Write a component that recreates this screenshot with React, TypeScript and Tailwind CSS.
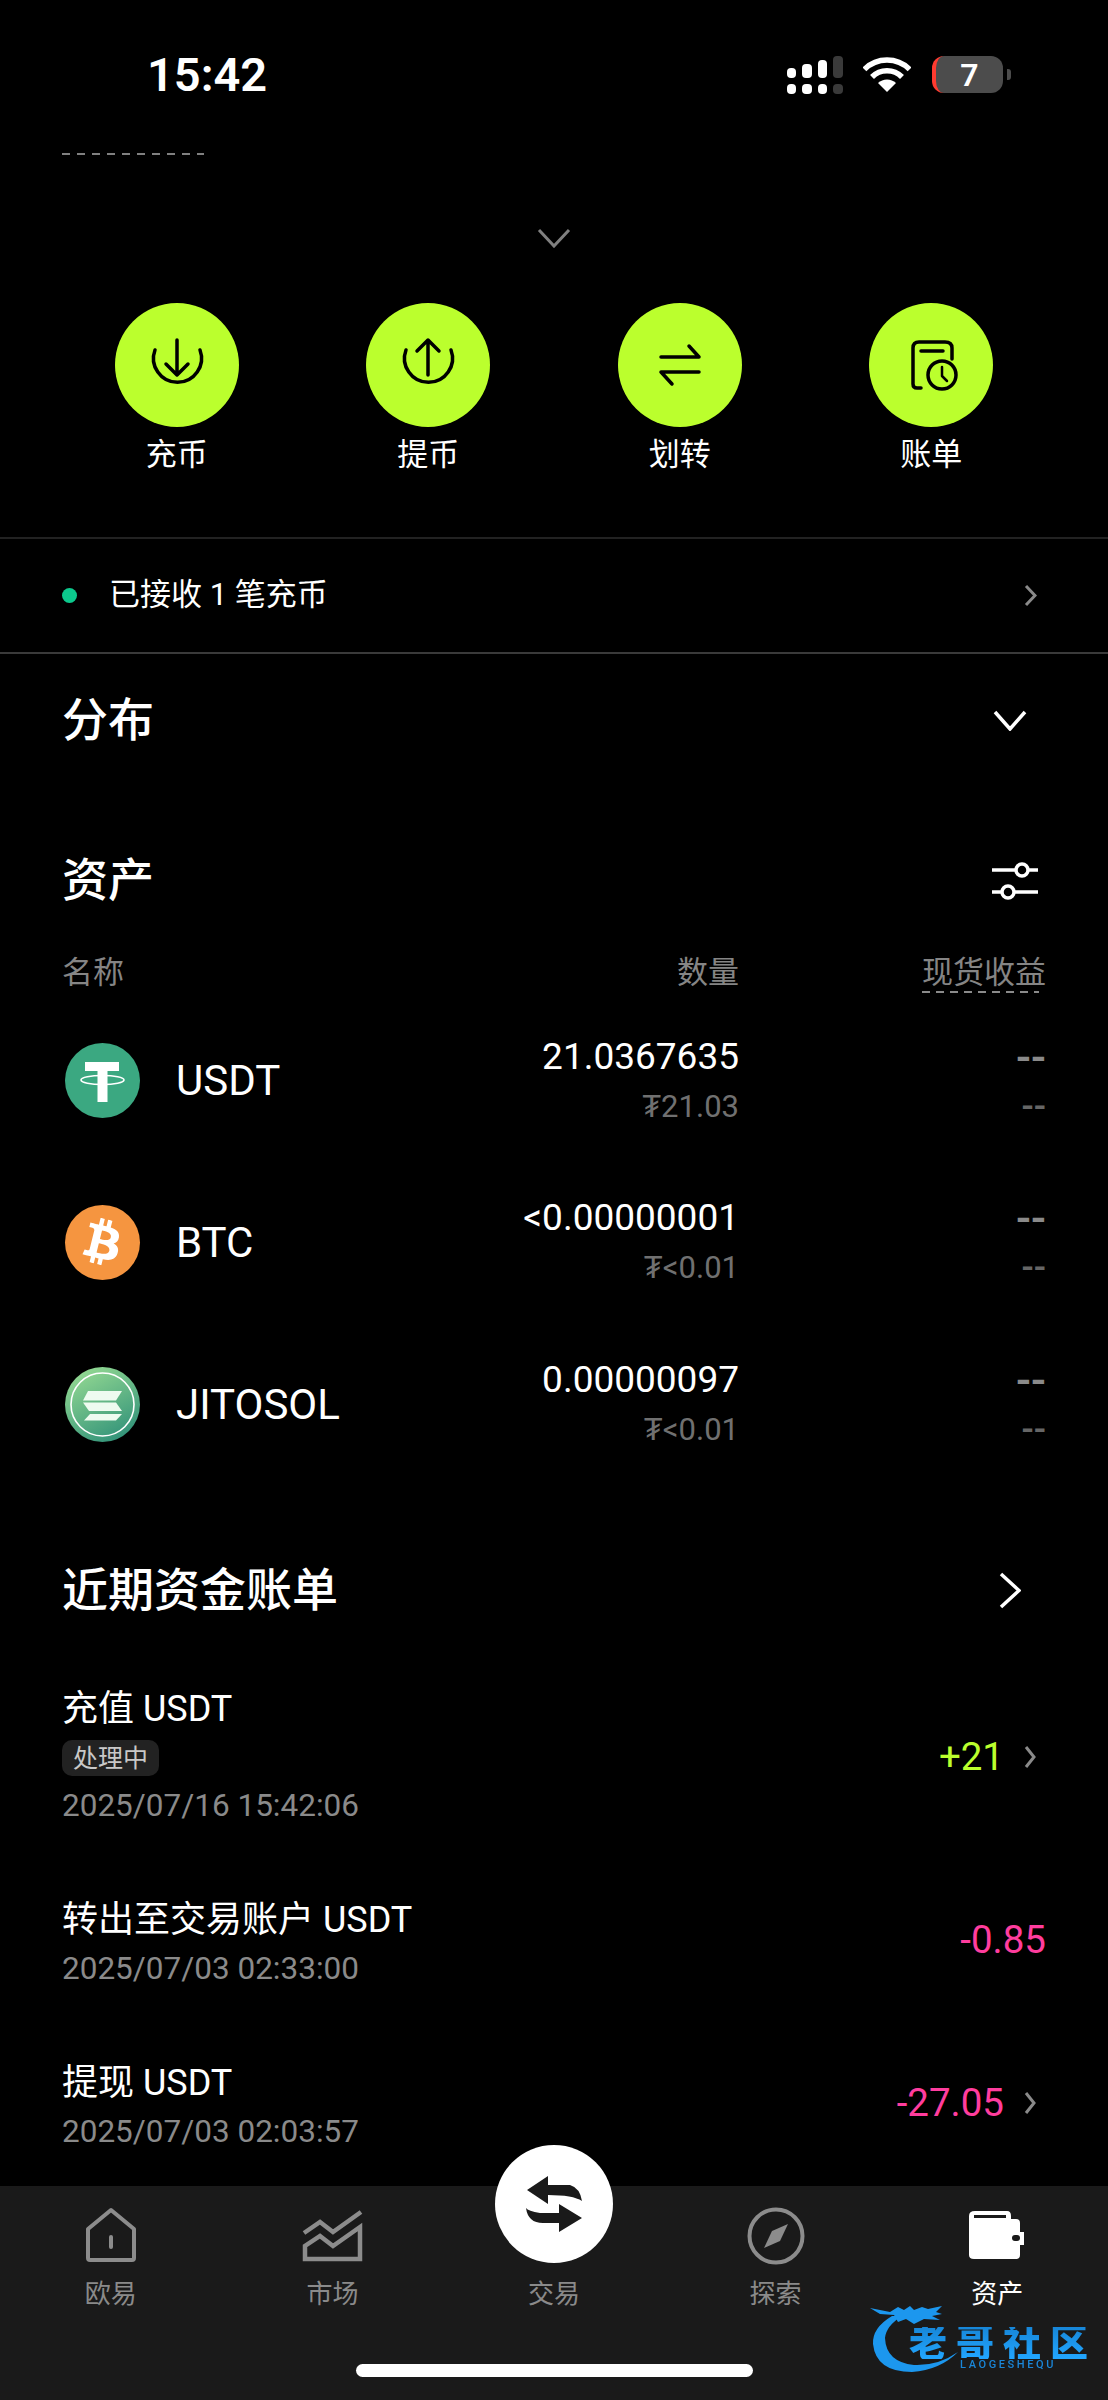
import { FaBtc } from "react-icons/fa";

function Chevron({ dir, w, h, sw = 3, className }: { dir: "down" | "right"; w: number; h: number; sw?: number; className?: string }) {
  const d = dir === "down" ? `M2 2L${w / 2} ${h - 2}L${w - 2} 2` : `M2 2L${w - 2} ${h / 2}L2 ${h - 2}`;
  return (
    <svg width={w} height={h} viewBox={`0 0 ${w} ${h}`} fill="none" stroke="currentColor" strokeWidth={sw} className={className}>
      <path d={d} />
    </svg>
  );
}

function StatusBar() {
  return (
    <div className="flex h-[150px] items-center justify-between pl-[147px] pr-[97px]">
      <span className="text-[47px] font-semibold leading-none">15:42</span>
      <div className="flex items-center">
        <svg width="56" height="38" viewBox="0 0 56 38" fill="#fff">
          <rect x="0" y="12" width="9" height="10" rx="4" />
          <rect x="15" y="8" width="10" height="14" rx="4" />
          <rect x="31" y="4" width="9" height="18" rx="4" />
          <rect x="46" y="0" width="10" height="22" rx="4" fill="#3a3a3a" />
          <rect x="0" y="28" width="9" height="10" rx="4" />
          <rect x="15" y="28" width="10" height="10" rx="4" />
          <rect x="31" y="28" width="9" height="10" rx="4" />
          <rect x="46" y="28" width="10" height="10" rx="4" fill="#3a3a3a" />
        </svg>
        <svg width="48" height="36" viewBox="0 0 48 36" fill="none" stroke="#fff" className="ml-[20px]">
          <path d="M1.4 12.4A32 32 0 0 1 46.6 12.4" strokeWidth="5.5" />
          <path d="M9 20A21 21 0 0 1 39 20" strokeWidth="5.5" />
          <path d="M24 35L15 26A13 13 0 0 1 33 26Z" fill="#fff" stroke="none" />
        </svg>
        <div className="ml-[21px] flex h-[37px] w-[71px] items-center justify-center overflow-hidden rounded-[12px] border-l-[4px] border-[#ff3b30] bg-[#4c4c4c] text-[32px] font-semibold leading-none">
          7
        </div>
        <div className="ml-[4px] h-[11px] w-[4px] rounded-r-[3px] bg-[#4c4c4c]" />
      </div>
    </div>
  );
}

const actionIcons = {
  down: (
    <>
      <path d="M40 47A24 24 0 1 0 85 47" />
      <path d="M62 37V72M51 61l11 11 11-11" />
    </>
  ),
  up: (
    <>
      <path d="M40 47A24 24 0 1 0 85 47" />
      <path d="M62 72V37M51 48l11-11 11 11" />
    </>
  ),
  swap: (
    <>
      <path d="M43 54H81L71 43" />
      <path d="M81 69H43L54 81" />
    </>
  ),
  bill: (
    <>
      <path d="M52 85H48Q44 85 44 81V45Q44 39 50 39H76Q83 39 83 45V56" />
      <path d="M52 48H74" />
      <circle cx="73" cy="72" r="14" />
      <path d="M73 64V73L78 78" strokeWidth="2.5" />
    </>
  ),
};

const actions: { label: string; icon: keyof typeof actionIcons }[] = [
  { label: "充币", icon: "down" },
  { label: "提币", icon: "up" },
  { label: "划转", icon: "swap" },
  { label: "账单", icon: "bill" },
];

function TetherIcon() {
  return (
    <svg viewBox="0 0 75 75" className="h-[75px] w-[75px] shrink-0">
      <circle cx="37.5" cy="37.5" r="37.5" fill="#3ba881" />
      <path d="M20 19H54V28H42.500V59H32.500V28H20Z" fill="#fff" />
      <ellipse cx="37.500" cy="37" rx="21.500" ry="4.500" fill="none" stroke="#fff" strokeWidth="1.600" />
    </svg>
  );
}

function BtcIcon() {
  return (
    <div className="flex h-[75px] w-[75px] shrink-0 items-center justify-center rounded-full bg-[#f59540] text-white">
      <FaBtc size={46} className="rotate-[14deg]" />
    </div>
  );
}

function JitoIcon() {
  return (
    <svg viewBox="0 0 75 75" className="h-[75px] w-[75px] shrink-0">
      <defs>
        <linearGradient id="jito" x1="0.25" y1="0" x2="0.8" y2="1">
          <stop offset="0" stopColor="#94d992" />
          <stop offset="1" stopColor="#2d8f78" />
        </linearGradient>
      </defs>
      <circle cx="37.500" cy="37.500" r="37.500" fill="url(#jito)" />
      <circle cx="37.500" cy="37.500" r="31.500" fill="none" stroke="#fff" strokeWidth="1.600" />
      <g fill="#eefbf0">
        <path d="M23 24H57L51 33.500H18Z" />
        <path d="M18 35.500H51L57 44H24Z" />
        <path d="M25 47H57L51 53.500H19Z" />
      </g>
    </svg>
  );
}

const assets = [
  { name: "USDT", amount: "21.0367635", fiat: "₮21.03", icon: <TetherIcon /> },
  { name: "BTC", amount: "<0.00000001", fiat: "₮<0.01", icon: <BtcIcon /> },
  { name: "JITOSOL", amount: "0.00000097", fiat: "₮<0.01", icon: <JitoIcon /> },
];

const bills = [
  {
    title: "转出至交易账户 USDT",
    date: "2025/07/03 02:33:00",
    amount: "-0.85",
    arrow: false,
    gap: "mt-[54px]",
  },
  {
    title: "提现 USDT",
    date: "2025/07/03 02:03:57",
    amount: "-27.05",
    arrow: true,
    gap: "mt-[57px]",
  },
];

function BottomNav() {
  return (
    <div className="relative mt-[30px] h-[214px] bg-[#1a1a1a]">
      <div className="grid grid-cols-5 pt-[21px] text-[26px] leading-[36px] text-[#8a8a8a]">
        <div className="flex flex-col items-center">
          <svg width="56" height="56" viewBox="0 0 56 56" fill="none" stroke="#8c8c8c" strokeWidth="4">
            <path d="M5 51V22L28 3L51 22V51Q51 53 49 53H7Q5 53 5 51Z" strokeLinejoin="round" />
            <path d="M28 30V40" strokeLinecap="round" />
          </svg>
          <span className="mt-[13px]">欧易</span>
        </div>
        <div className="flex flex-col items-center">
          <svg width="64" height="56" viewBox="0 0 64 56" fill="none" stroke="#8c8c8c" strokeWidth="4.500">
            <path d="M4 26L20 15L33 25L61 5" />
            <path d="M5 52V39L20 29L33 39L60 20V52Z" />
          </svg>
          <span className="mt-[13px]">市场</span>
        </div>
        <div className="flex flex-col items-center">
          <div className="relative h-[56px] w-[56px]">
            <div className="absolute bottom-0 left-1/2 flex h-[118px] w-[118px] -translate-x-1/2 items-center justify-center rounded-full bg-white">
              <svg width="118" height="118" viewBox="0 0 118 118" fill="#1a1a1a">
                <path d="M32 45L53 31V40H75Q85 43 87 56Q78 50 53 50V59Z" />
                <path d="M87 73L64 59V68H45Q33 66 31 63Q33 78 48 78H64V87Z" />
              </svg>
            </div>
          </div>
          <span className="mt-[13px]">交易</span>
        </div>
        <div className="flex flex-col items-center">
          <svg width="58" height="58" viewBox="0 0 58 58" fill="none">
            <circle cx="29" cy="29" r="26.500" stroke="#8c8c8c" strokeWidth="4" />
            <path d="M41 17L33 34L17 41L25 24Z" fill="#8c8c8c" />
          </svg>
          <span className="mt-[11px]">探索</span>
        </div>
        <div className="flex flex-col items-center text-white">
          <svg width="56" height="56" viewBox="0 0 56 56" fill="#fff">
            <path d="M6 4H38Q42 4 42 9V12H47Q51 12 51 16V25H55V38H51V48Q51 52 47 52H5Q0 52 0 48V9Q0 4 6 4Z" />
            <rect x="5" y="8" width="32" height="3" fill="#1a1a1a" />
            <rect x="43" y="28" width="8" height="6" rx="3" fill="#1a1a1a" />
          </svg>
          <span className="mt-[13px]">资产</span>
        </div>
      </div>
      <div className="mx-auto mt-[52px] h-[13px] w-[397px] rounded-full bg-white" />
    </div>
  );
}

function Watermark() {
  return (
    <div className="absolute left-[868px] top-[2302px] h-[74px] w-[226px] blur-[0.5px]">
      <svg width="100" height="74" viewBox="0 0 100 74" className="absolute left-0 top-0">
        <path d="M24 14Q4 26 5 42Q8 70 44 70Q72 68 90 50Q70 64 46 63Q18 60 17 36Q18 24 34 14Z" fill="#1c97ee" />
        <path
          d="M2 6L22 10L30 5L36 8L42 4L46 8L54 5L60 7L74 4L68 10L74 12L64 14L72 18L56 17L46 22L38 17L30 20L26 13L12 12Z"
          fill="#1c97ee"
        />
      </svg>
      <span className="absolute left-[41px] top-[25px] whitespace-nowrap bg-gradient-to-b from-[#1786d8] to-[#22a6ff] bg-clip-text text-[38px] font-black leading-[32px] tracking-[9px] text-transparent">
        老哥社区
      </span>
      <span className="absolute left-[92px] top-[58px] whitespace-nowrap text-[11px] font-medium leading-[10px] tracking-[2.600px] text-[#1a86d8]">
        LAOGESHEQU
      </span>
    </div>
  );
}

export default function App() {
  return (
    <div className="relative flex h-[2400px] w-[1108px] flex-col overflow-hidden bg-black font-[Roboto,'Noto_Sans_CJK_SC',sans-serif] text-white">
      <StatusBar />

      <div className="ml-[62px] mt-[3px] h-[2px] w-[142px] bg-[repeating-linear-gradient(90deg,#808080_0,#808080_8px,transparent_8px,transparent_15px)]" />

      <div className="mt-[73px] flex justify-center text-[#808080]">
        <Chevron dir="down" w={34} h={20} />
      </div>

      <div className="mt-[55px] grid grid-cols-4 px-[51px]">
        {actions.map((a) => (
          <div key={a.label} className="flex flex-col items-center">
            <div className="h-[124px] w-[124px] rounded-full bg-[#bbff2d]">
              <svg viewBox="0 0 124 124" fill="none" stroke="#000" strokeWidth="3.500" strokeLinecap="round" strokeLinejoin="round">
                {actionIcons[a.icon]}
              </svg>
            </div>
            <span className="mt-[9px] text-[31px] leading-[38px]">{a.label}</span>
          </div>
        ))}
      </div>

      <div className="mt-[63px] flex h-[117px] items-center border-y-2 border-t-[#222] border-b-[#3a3a3a] pl-[62px] pr-[71px]">
        <span className="h-[15px] w-[15px] rounded-full bg-[#0cc98d]" />
        <span className="ml-[32px] flex-1 text-[31px]">已接收 1 笔充币</span>
        <Chevron dir="right" w={13} h={23} className="text-[#8a8a8a]" />
      </div>

      <div className="flex h-[134px] items-center justify-between pl-[62px] pr-[81px]">
        <span className="text-[46px] font-medium">分布</span>
        <Chevron dir="down" w={34} h={21} sw={3.5} />
      </div>

      <div className="mt-[53px] flex h-[80px] items-center justify-between pl-[62px] pr-[70px]">
        <span className="text-[46px] font-medium">资产</span>
        <svg width="46" height="44" viewBox="0 0 46 44" fill="none" stroke="#fff" strokeWidth="3.500">
          <path d="M0 11H24M36 11H46" />
          <circle cx="30" cy="11" r="6" />
          <path d="M0 33H10M22 33H46" />
          <circle cx="16" cy="33" r="6" />
        </svg>
      </div>

      <div className="mt-[26px] flex h-[53px] items-center pl-[62px] pr-[62px] text-[31px] text-[#858585]">
        <span className="flex-1">名称</span>
        <span>数量</span>
        <span className="relative ml-[183px]">
          现货收益
          <span className="absolute bottom-[3px] left-0 h-[2px] w-[117px] bg-[repeating-linear-gradient(90deg,#8a8a8a_0,#8a8a8a_8px,transparent_8px,transparent_14px)]" />
        </span>
      </div>

      {assets.map((a) => (
        <div key={a.name} className="flex h-[162px] items-center pl-[65px] pr-[62px]">
          {a.icon}
          <span className="ml-[36px] flex-1 text-[42px]">{a.name}</span>
          <div className="flex w-[300px] flex-col items-end pt-[2px]">
            <span className="text-[37px] leading-[50px]">{a.amount}</span>
            <span className="text-[31px] leading-[50px] text-[#707070]">{a.fiat}</span>
          </div>
          <div className="flex w-[307px] flex-col items-end pt-[2px] font-medium text-[#8a8a8a]">
            <span className="text-[44px] leading-[50px]">--</span>
            <span className="text-[36px] leading-[50px] text-[#666]">--</span>
          </div>
        </div>
      ))}

      <div className="mt-[65px] flex h-[80px] items-center justify-between pl-[62px] pr-[87px]">
        <span className="text-[46px] font-medium">近期资金账单</span>
        <Chevron dir="right" w={22} h={37} sw={3.5} />
      </div>

      <div className="mt-[51px] flex h-[152px] items-center justify-between pl-[62px] pr-[62px]">
        <div>
          <div className="text-[36px] leading-[56px]">充值 USDT</div>
          <div className="mt-[3px] flex h-[36px] w-[97px] items-center justify-center rounded-[10px] bg-[#222] text-[25px] text-[#c8c8c8]">
            处理中
          </div>
          <div className="mt-[3px] text-[31.5px] leading-[54px] text-[#8a8a8a]">2025/07/16 15:42:06</div>
        </div>
        <div className="flex items-center gap-[20px] pr-[10px]">
          <span className="text-[38.5px] text-[#bbff2d]">+21</span>
          <Chevron dir="right" w={12} h={24} className="text-[#8a8a8a]" />
        </div>
      </div>

      {bills.map((b) => (
        <div key={b.title} className={`${b.gap} flex h-[106px] items-center justify-between pl-[62px] pr-[62px]`}>
          <div>
            <div className="text-[36px] leading-[56px]">{b.title}</div>
            <div className="text-[31.5px] leading-[41px] text-[#8a8a8a]">{b.date}</div>
          </div>
          <div className={`flex items-center gap-[20px] ${b.arrow ? "pr-[10px]" : ""}`}>
            <span className="text-[38.5px] text-[#ff3d9e]">{b.amount}</span>
            {b.arrow && <Chevron dir="right" w={12} h={24} className="text-[#8a8a8a]" />}
          </div>
        </div>
      ))}

      <BottomNav />
      <Watermark />
    </div>
  );
}
